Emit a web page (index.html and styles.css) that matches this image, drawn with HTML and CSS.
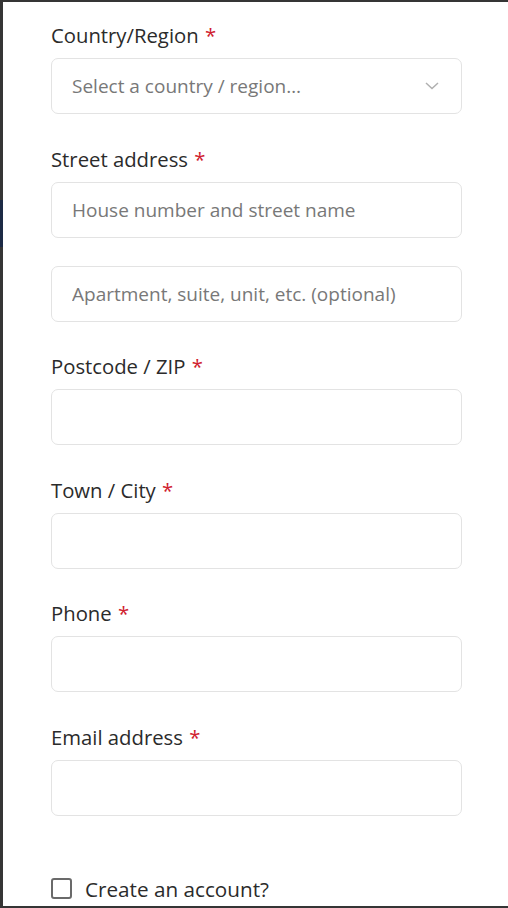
FILE: index.html
```html
<!DOCTYPE html>
<html lang="en">
<head>
  <meta charset="UTF-8" />
  <meta name="viewport" content="width=device-width, initial-scale=1" />
  <title>Checkout - Billing details</title>
  <link rel="stylesheet" href="styles.css">
</head>
<body>
  <div class="sheet">
    <form class="billing">
      <div class="field">
        <label for="country">Country/Region <span class="req">*</span></label>
        <div class="select">
          <span class="select-text">Select a country / region…</span>
          <svg class="chevron" width="14" height="8" viewBox="0 0 14 8" aria-hidden="true">
            <path d="M1 1l6 5.5L13 1" fill="none" stroke="#b0b0b0" stroke-width="1.5" />
          </svg>
        </div>
      </div>

      <div class="field">
        <label for="street">Street address <span class="req">*</span></label>
        <input type="text" id="street" placeholder="House number and street name" />
        <input type="text" id="street2" class="second" placeholder="Apartment, suite, unit, etc. (optional)" />
      </div>

      <div class="field">
        <label for="zip">Postcode / ZIP <span class="req">*</span></label>
        <input type="text" id="zip" />
      </div>

      <div class="field">
        <label for="city">Town / City <span class="req">*</span></label>
        <input type="text" id="city" />
      </div>

      <div class="field">
        <label for="phone">Phone <span class="req">*</span></label>
        <input type="tel" id="phone" />
      </div>

      <div class="field">
        <label for="email">Email address <span class="req">*</span></label>
        <input type="email" id="email" />
      </div>

      <label class="check">
        <span class="box"></span>
        Create an account?
      </label>
    </form>
  </div>
</body>
</html>
```

FILE: styles.css
```css
:root {
  --texto: #2b2b2b;
  --borda: #e3e3e3;
  --placeholder: #787878;
  --vermelho: #d0202e;
}
* {
  margin: 0;
  padding: 0;
  box-sizing: border-box;
}
html, body {
  height: 100%;
  overflow: hidden;
}
body {
  font-family: 'Open Sans', 'Noto Sans', sans-serif;
  color: var(--texto);
  background: linear-gradient(to bottom,
    #353535 0, #353535 200px,
    #1c2a45 200px, #1c2a45 247px,
    #353535 247px, #353535 100%);
}
.sheet {
  background: white;
  margin: 2px 0 0 3px;
  height: 904px;
  padding: 19px 46px 0 48px;
}

.field {
  margin-bottom: 30.5px;
}
.field label {
  display: block;
  font-size: 20.3px;
  line-height: 28px;
  margin-bottom: 9px;
}
.req {
  color: var(--vermelho);
  margin-left: 1px;
}

input,
.select {
  display: block;
  width: 100%;
  height: 56px;
  border: 1px solid var(--borda);
  border-radius: 7px;
  background: white;
  padding: 0 20px;
  font-family: inherit;
  font-size: 19px;
  color: var(--texto);
}
input::placeholder {
  color: var(--placeholder);
}
input.second {
  margin-top: 28px;
}
.select {
  display: flex;
  align-items: center;
  justify-content: space-between;
  padding-right: 22px;
}
.select-text {
  color: var(--placeholder);
}

.check {
  display: flex;
  align-items: center;
  gap: 13px;
  margin-top: 61px;
  font-size: 20.7px;
  line-height: 24px;
}
.check .box {
  width: 21px;
  height: 21px;
  border: 2px solid #6a6a6a;
  border-radius: 3px;
}
```
